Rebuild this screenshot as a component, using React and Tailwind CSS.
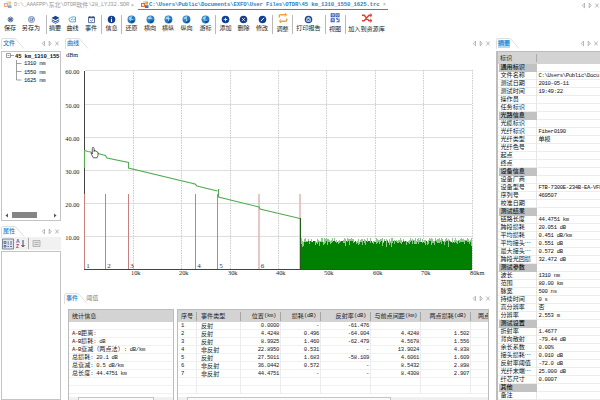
import React from "react";

const MONO = "font-['Liberation_Mono','Noto_Sans_CJK_SC',monospace]";

// Half-width characters use a 3px pitch, full-width ones a 6px pitch.
function T({ children, track = "tracking-[-0.33px]" }) {
  const runs = String(children).match(/[\x00-\x7f]+|[^\x00-\x7f]+/g) || [];
  return runs.map((r, i) =>
    r.charCodeAt(0) < 128 ? (
      <span key={i} className={`${MONO} whitespace-pre text-[5.6px] ${track}`}>{r}</span>
    ) : (
      <span key={i} className="whitespace-pre font-['Noto_Sans_CJK_SC',sans-serif] text-[6.1px]">{r}</span>
    )
  );
}

function Controls() {
  return (
    <svg className="h-[7px] w-[18px] shrink-0" viewBox="0 0 18 7" fill="none" stroke="#999" strokeWidth=".7">
      <path d="M3.5 1.2v4.6L1.2 3.5zM8.2 1.2v4.6l2-2.3zM14.3 1.5l3.4 4M17.7 1.5l-3.4 4" />
    </svg>
  );
}

function PanelTabs({ active, other, selected }) {
  return (
    <div className="flex h-[13px] items-center justify-between pr-[2px]">
      <div className="flex h-full items-center">
        <svg className="h-[13px] w-[24px]" viewBox="0 0 24 13">
          <path d="M.5 13V4Q.5 2.5 2 2.5H13Q15 2.500 16.500 5L23 12.500" fill="#fff" stroke="#d5d5d5" strokeWidth=".8" />
        </svg>
        <span className={`-ml-[22px] mt-[2px] flex h-[8px] items-center leading-none font-medium text-[#1581d0] ${selected ? "bg-[#b4dbf5]" : ""}`}>
          <T>{active}</T>
        </span>
        {other && <span className="mt-[2px] ml-[8px] flex leading-none text-[#888]"><T>{other}</T></span>}
      </div>
      <div className="flex pt-px"><Controls /></div>
    </div>
  );
}

function Logo() {
  return (
    <svg className="h-[8px] w-[8px] shrink-0" viewBox="0 0 8 8">
      <path d="M2 0h5v5H2z" fill="#d8dde6" />
      <path d="M0 2h4v4H0z" fill="#ef6a2e" />
      <path d="M4.5.8h2.6v2.5H4.5z" fill="#f0a52d" />
      <path d="M4 4.3h3.5V7H4z" fill="#3c78c4" />
      <path d="M1.2 3h1.6v2H1.2z" fill="#fff" />
    </svg>
  );
}

const disc = (fill, mark) => (
  <>
    <circle cx="5" cy="5" r="4.2" fill={fill} />
    {mark}
  </>
);
const globe = (mark) => (
  <>
    <circle cx="5" cy="5" r="4.4" fill="#2a7cc0" />
    <path d="M1.5 3.5Q3 .8 6 1.4L5 4 2.2 5z" fill="#8fd0f0" />
    <path d="M4 7l4.800-1.500Q8 8.800 5 9.200z" fill="#0f4a8e" />
    <path d={mark} fill="none" stroke="#d5edff" strokeWidth=".7" />
  </>
);
const ICONS = {
  save: (
    <g fill="none" stroke="#3e5b94" strokeWidth=".9">
      <circle cx="5" cy="5" r="2.7" />
      <path d="M3.7 4h2.6v2H3.7z" fill="#3e5b94" />
    </g>
  ),
  saveAs: (
    <g fill="none" stroke="#4767a3" strokeWidth=".8">
      <circle cx="5" cy="5" r="3.4" />
      <path d="M3.4 3.5h3v3h-3zM4.2 5l1.2 1 2-2.5" />
    </g>
  ),
  layers: (
    <g fill="#17458c">
      <path d="M5 .8L9.5 3.2 5 5.6.5 3.2z" />
      <path d="M.8 4.8L5 7l4.2-2.2v1L5 8 .8 5.8zM.8 6.7L5 8.8l4.2-2.1v.9L5 9.8.8 7.6z" />
    </g>
  ),
  curve: (
    <g fill="none" stroke="#309bca" strokeWidth=".9">
      <path d="M1.5 3.5h1.2L4 2.2h4.3v5.5H2.5L1.2 5z" />
      <path d="M3.2 6l1.5-1.8 1.5 1.3 1.5-1" />
    </g>
  ),
  event: (
    <g fill="none" stroke="#33528d" strokeWidth=".9">
      <path d="M1.7 2.2h6.6v6.3H1.7z" />
      <path d="M1.7 3h6.6M3.2 1v1M6.8 1v1" strokeWidth="1.3" />
      <path d="M3.5 6l1.2 1L6.8 5" />
    </g>
  ),
  info: disc("#123d91", <path d="M5 2.4v1M5 4.3v3.4" stroke="#fff" strokeWidth="1.2" />),
  restore: globe("M3 5h4M3 5l1.5-1.5M3 5l1.5 1.5"),
  horiz: globe("M2.8 4h4M5.8 3l1.2 1"),
  both: globe("M3 4h4M5 3v4"),
  vert: globe("M5 2.8v4M4 5.8l1 1 1-1"),
  cursor: globe("M3 5.8h4M4 3.2v2"),
  add: disc("#143f8e", <path d="M3 5h4M5 3v4" stroke="#fff" strokeWidth=".9" />),
  del: disc("#143f8e", <path d="M3.5 3.5l3 3M6.5 3.5l-3 3" stroke="#fff" strokeWidth=".9" />),
  edit: disc("#143f8e", <path d="M3.2 6.8l3.5-3.6" stroke="#fff" strokeWidth="1.1" />),
  adjust: (
    <g fill="none" stroke="#f2a43c" strokeWidth="1.4">
      <path d="M1.3 4.5V2.8q0-1 1-1H8M8.7 5.5v1.7q0 1-1 1H2" />
      <path d="M7 0l1.8 1.8L7 3.6M3 6.4L1.2 8.2 3 10" strokeWidth="1" />
    </g>
  ),
  print: disc("#1c4a93", <path d="M3 4h4v3H3zM3.8 2.8h2.4M4 5.5l1 .8 1.5-1.5" fill="none" stroke="#fff" strokeWidth=".8" />),
  view: (
    <g fill="none" stroke="#3459b5" strokeWidth="1.1">
      <path d="M1.2 .8h3v3h-3zM6 .8h3v3H6zM1.2 5.8h3v3h-3zM6 5.8h1.3v1.3M9 5.5v3.3H6.5" />
      <path d="M2.2 2.3h1M7 2.3h1M2.2 7.3h1" />
    </g>
  ),
  join: (
    <g fill="none" stroke="#e63b31" strokeWidth="1.4">
      <path d="M0 2.3h2.2L7 7.7h2.3M0 7.7h2.2L7 2.3h2.3" />
      <path d="M8.2.7L10 2.3 8.2 3.9M8.2 6.1L10 7.7 8.2 9.3" strokeWidth="1" />
    </g>
  ),
};

const SEP = "sep";
const TOOLS = [
  ["save", "保存", "w-[20px]"], ["saveAs", "另存为", "w-[22px]"], [SEP, "ml-[4px]"],
  ["layers", "摘要", "w-[16px]"], ["curve", "曲线", "w-[19px]"], ["event", "事件", "w-[18px]"], [SEP, "ml-px"],
  ["info", "信息", "w-[19px]"], [SEP, ""],
  ["restore", "还原", "w-[19px]"], ["horiz", "横向", "w-[18px]"], ["both", "横纵", "w-[18px]"],
  ["vert", "纵向", "w-[19px]"], ["cursor", "游标", "w-[19px]"], [SEP, ""],
  ["add", "添加", "w-[19px]"], ["del", "删除", "w-[17px]"], ["edit", "修改", "w-[20px]"], [SEP, ""],
  ["adjust", "调整", "w-[19px]", true], [SEP, ""],
  ["print", "打印报告", "w-[31px]"], [SEP, "ml-px"],
  ["view", "视图", "w-[18px]", true], [SEP, "ml-px"],
  ["join", "加入到资源库", "w-[41px]", true],
];

function Toolbar() {
  return (
    <div className="flex h-[26px] shrink-0 pt-[3px]">
      {TOOLS.map(([icon, label, w, low], i) =>
        icon === SEP ? (
          <div key={i} className={`mt-[2px] h-[19px] w-px shrink-0 bg-[#b9b9b9] ${label}`} />
        ) : (
          <div key={i} className={`flex shrink-0 flex-col items-center leading-none whitespace-nowrap text-[#1a1a1a] ${w} ${low ? "gap-[3px]" : "gap-px pt-[2px]"}`}>
            <svg className={`shrink-0 ${low ? "h-[10px] w-[10px]" : "h-[9px] w-[9px]"}`} viewBox="0 0 10 10">{ICONS[icon]}</svg>
            <span className="flex h-[7px] items-center"><T>{label}</T></span>
          </div>
        )
      )}
    </div>
  );
}

const SUMMARY = [
  ["通用标识"], ["文件名称", "C:\\Users\\Public\\Docu"], ["测试日期", "2010-05-11"], ["测试时间", "19:49:22"], ["操作员", ""], ["任务标识", ""],
  ["光路信息"], ["光缆标识", ""], ["光纤标识", "Fiber0190"], ["光纤类型", "单模"], ["光纤色号", ""], ["起点", ""], ["终点", ""],
  ["设备信息"], ["设备厂商", ""], ["设备型号", "FTB-7300E-234B-EA-VFL"], ["序列号", "469507"], ["校准日期", ""],
  ["测试结果"], ["链路长度", "44.4751 km"], ["跨段损耗", "20.051 dB"], ["平均损耗", "0.451 dB/km"], ["平均接头…", "0.551 dB"], ["最大接头…", "0.572 dB"], ["跨段光回损", "32.472 dB"],
  ["测试参数"], ["波长", "1310 nm"], ["范围", "80.00 km"], ["脉宽", "500 ns"], ["持续时间", "0 s"], ["高分辨率", "否"], ["分辨率", "2.553 m"],
  ["测试设置"], ["折射率", "1.4677"], ["背向散射", "-79.44 dB"], ["余长系数", "0.00%"], ["接头损耗…", "0.010 dB"], ["反射率阈值", "-72.0 dB"], ["光纤末端…", "25.000 dB"], ["纤芯尺寸", "0.0007"],
  ["其他"], ["备注", ""],
];

function Summary() {
  return (
    <div className="flex w-[104px] shrink-0 flex-col overflow-hidden">
      <PanelTabs active="摘要" selected />
      <div className="mt-[2px] flex-1 overflow-hidden border-t border-l-2 border-[#bcbcbc]">
        <div className="flex h-[12px] items-center bg-[#d3d3d3] leading-none text-[#222]">
          <span className="flex w-[38px] pl-[2px]"><T>标识</T></span>
          <div className="h-[8px] w-px bg-[#aaa]" />
        </div>
        {SUMMARY.map(([name, value], i) => (
          <div key={i} className="flex h-[8px] items-center whitespace-nowrap border-b border-[#ededed] leading-none text-[#111]">
            <div className={`ml-px flex h-[8px] w-[38px] shrink-0 items-center border-r pl-[1.5px] ${value === undefined ? "border-[#c2c2c2] bg-[#c2c2c2] font-medium" : "border-[#e6e6e6]"}`}><T>{name}</T></div>
            {value && <div className="flex pl-[1.5px]"><T>{value}</T></div>}
          </div>
        ))}
      </div>
    </div>
  );
}

const COLS = [
  ["序号", "w-[19px] pl-[3px]", ""],
  ["事件类型", "w-[44px] pl-[4px]", ""],
  ["位置(km)", "w-[40px] justify-end", "pr-[4px]"],
  ["损耗(dB)", "w-[40px] justify-end", "pr-[4px]"],
  ["反射率(dB)", "w-[50px] justify-end", "pr-[4px]"],
  ["与前点间距(km)", "w-[50px] justify-end", "pr-[3px]"],
  ["两点损耗(dB)", "w-[50px] justify-end", "pr-[4px]"],
  ["两点", "w-[18px] pl-[7px]", ""],
];
const EVENTS = [
  ["1", "反射", "0.0000", "-", "-61.476", "", ""],
  ["2", "反射", "4.4248", "0.496", "-64.004", "4.4248", "1.502"],
  ["3", "反射", "8.9925", "1.460", "-62.479", "4.5678", "1.556"],
  ["4", "非反射", "22.8950", "0.531", "-", "13.9024", "4.838"],
  ["5", "反射", "27.5011", "1.683", "-58.109", "4.6061", "1.609"],
  ["6", "非反射", "36.0442", "0.572", "-", "8.5432", "2.898"],
  ["7", "非反射", "44.4751", "-", "-", "8.4308", "2.907"],
  [], [],
];
const STATS = ["", "A-B距离:", "A-B损耗: dB", "A-B衰减（两点法）: dB/km", "总损耗: 20.1 dB", "总衰减: 0.5 dB/km", "总长度: 44.4751 km", "", ""];

function Scroll({ thumb }) {
  return (
    <div className="mt-[3px] flex h-[3px] bg-[#f0f0f0]">
      <div className="w-[9px] shrink-0" />
      <div className={`shrink-0 border border-b-0 border-[#c4c4c4] bg-[#fafafa] ${thumb}`} />
    </div>
  );
}

function EventPanel() {
  return (
    <div className="flex h-[109px] shrink-0 flex-col">
      <PanelTabs active="事件" other="阈值" />
      <div className="mt-[5px] flex flex-1 gap-[3px] overflow-hidden pl-[4px]">
        <div className="w-[106px] shrink-0 border-x border-t border-[#bcbcbc]">
          <div className="flex h-[12px] items-center bg-[#d3d3d3] pl-[3px] leading-none text-[#222]"><T>统计信息</T></div>
          {STATS.map((s, i) => (
            <div key={i} className="flex h-[8px] items-center whitespace-nowrap border-b border-[#f1f1f1] pl-[3px] leading-none text-[#222]"><T>{s}</T></div>
          ))}
          <Scroll thumb="w-[76px]" />
        </div>
        <div className="w-[312px] shrink-0 overflow-hidden border-x border-t border-[#bcbcbc]">
          <div className="flex h-[12px] items-center bg-[#d3d3d3] leading-none text-[#222]">
            {COLS.map(([name, w, pr]) => (
              <div key={name} className={`flex h-[9px] shrink-0 items-center whitespace-nowrap border-r border-[#a5a5a5] ${w} ${pr}`}><T>{name}</T></div>
            ))}
          </div>
          {EVENTS.map((row, r) => (
            <div key={r} className="flex h-[8px] items-center border-b border-[#f1f1f1] leading-none text-[#222]">
              {COLS.map(([name, w], c) => (
                <div key={name} className={`flex h-[8px] shrink-0 items-center whitespace-nowrap border-r border-[#ececec] pt-px ${w} ${c > 1 ? "pr-px" : ""}`}><T>{row[c] ?? ""}</T></div>
              ))}
            </div>
          ))}
          <Scroll thumb="w-[204px]" />
        </div>
      </div>
    </div>
  );
}

const NOISE = (() => {
  let seed = 41;
  const next = () => (seed = (seed * 16807) % 2147483647) / 2147483647;
  const bars = [];
  for (let x = 301; x < 472; x++) bars.push([x, 238 + Math.round(next() * 4), 241 + Math.round(next() * next() * 7)]);
  return bars;
})();
const MARKS = [[84.5, "1"], [105.5, "2"], [128.5, "3"], [195.5, "4"], [217.5, "5"], [259, "6"], [300, ""]];
const YS = [[70.5, "60.00"], [104.5, "50.00"], [137.5, "40.00"], [170.5, "30.00"], [203.5, "20.00"], [236.5, "10.00"]];
const XS = [[133.5, "10k"], [181.5, "20k"], [230.5, "30k"], [278.5, "40k"], [326.5, "50k"], [375.5, "60k"], [423.5, "70k"], [472.5, "80km"]];

function Chart() {
  const txt = "font-['Liberation_Serif',serif] text-[6.3px]";
  return (
    <svg className="h-[242px] w-[432px] shrink-0" viewBox="64 49 432 242">
      {YS.map(([y]) => <path key={y} d={`M85 ${y}H472`} stroke="#dedede" />)}
      {XS.map(([x]) => <path key={x} d={`M${x} 70V269`} stroke="#ccc" strokeDasharray="1.5 1" />)}
      {YS.map(([y, s]) => <text key={s} x="79.5" y={y + 3.2} textAnchor="end" className={txt} fill="#222">{s}</text>)}
      {XS.map(([x, s]) => <text key={s} x={x - 2.5} y="274.700" className={txt} fill="#222">{s}</text>)}
      <text x="66" y="57" className={txt} fill="#222">dBm</text>
      {NOISE.map(([x, a, b]) => (
        <g key={x}>
          <path d={`M${x + 0.5} ${a}V269`} stroke="#8fc88f" />
          <path d={`M${x + 0.5} ${b}V269`} stroke="#008000" />
        </g>
      ))}
      <path d="M84.5 71V269M84 269.5H472" stroke="#444" fill="none" />
      {MARKS.map(([x, s], i) => (
        <g key={x}>
          <path d={`M${x} 194V269`} stroke={i > 4 ? "#e3b9b5" : "#c97f7f"} strokeWidth={i > 4 ? 1.6 : 1} />
          <text x={x + 1.8} y="267.500" className="font-['Liberation_Serif',serif] text-[7px]" fill="#335">{s}</text>
        </g>
      ))}
      <path
        d="M84.5 168V150.5L88 151.5L99 153.8L105.5 155.5L107 158L128.5 162.5V168L195 184L197 186L217.5 191M218.5 189V197L259 207L260 209L300 218.5"
        fill="none" stroke="#4fac4f" strokeWidth="1.1"
      />
      <path d="M300.5 218V269" stroke="#225c18" />
      <path
        d="M92.3 154V148.3q.1-1.1 1-.9.8.1.8 1v3.2l.3-1.2q1.1-.3 1.2.8 1.1-.3 1.2.7 1.2-.2 1.2.9v2.6l-1 2.4h-3.7L91 153.2q.5-1 1.3.8"
        fill="#fff" stroke="#222" strokeWidth=".7"
      />
    </svg>
  );
}

function FilePanel() {
  return (
    <div className="flex w-[61px] shrink-0 flex-col pl-px">
      <PanelTabs active="文件" />
      <div className="mt-[2px] flex h-[170px] shrink-0 flex-col border border-[#c4c4c4] leading-none text-[#111]">
        <div className="flex h-[154px] shrink-0">
          <svg className="h-[40px] w-[21px] shrink-0" viewBox="0 0 21 40" fill="none" stroke="#888" strokeWidth=".8">
            <path d="M4.500 1.500h4v4h-4zM5.500 3.500h2M8.500 3.500h3.500M14.500 8v20h5M14.500 11.500h5M14.500 19.500h5" />
          </svg>
          <div className="-ml-[8px] flex w-[45px] shrink-0 flex-col pt-px">
            <span className="flex h-[7px] w-[45px] shrink-0 items-center overflow-x-clip font-bold whitespace-nowrap"><T track="tracking-[-0.2px]">45 km_1310_155</T></span>
            <div className="flex flex-col pl-[9px]">
              {["1310 nm", "1550 nm", "1625 nm"].map((s) => <span key={s} className="flex h-[8.500px] shrink-0 items-center"><T>{s}</T></span>)}
            </div>
          </div>
        </div>
        <div className="mt-[5px] flex h-[8px] shrink-0 items-center">
          <svg className="ml-[3px] h-[5px] w-[4px] shrink-0" viewBox="0 0 4 5"><path d="M3 .5v4L.5 2.500z" fill="#555" /></svg>
          <div className="ml-[3px] h-[6px] w-[25px] shrink-0 bg-[#858585]" />
          <svg className="ml-[16px] h-[5px] w-[4px] shrink-0" viewBox="0 0 4 5"><path d="M1 .5v4l2.500-2z" fill="#555" /></svg>
        </div>
      </div>
      <div className="mt-[3px]"><PanelTabs active="属性" /></div>
      <div className="flex h-[13px] shrink-0 items-center gap-[2px] bg-[#f0f1f0] pl-px">
        <svg className="h-[12px] w-[12px]" viewBox="0 0 12 12" fill="none" stroke="#5f7190">
          <path d="M.5 1h11v10H.5z" fill="#dfe3ec" strokeWidth=".8" />
          <path d="M2 3.500h2v2H2zM2 7.500h2v1.500H2zM5.500 4h1.500M8 4h2M5.500 6h1.500M8 6h2M5.500 8.500h1.500M8 8.500h2" strokeWidth="1" />
        </svg>
        <span className="flex flex-col pr-px font-['Liberation_Sans',sans-serif] text-[5px] leading-[4.500px] font-bold">
          <span className="text-[#3b67b9]">A</span><span className="text-[#a33d49]">Z</span>
        </span>
        <svg className="-ml-[2px] h-[9px] w-[4px]" viewBox="0 0 4 9"><path d="M2 1v6.500M.5 6L2 7.800 3.500 6" stroke="#333" fill="none" strokeWidth=".9" /></svg>
        <div className="ml-px h-[11px] w-px bg-[#aaa]" />
        <svg className="ml-px h-[9px] w-[9px]" viewBox="0 0 9 9"><path d="M1 1.500h7v6H1zM2.500 3.500h4M2.500 5.500h4" fill="#e2e2e2" stroke="#aaa" strokeWidth=".8" /></svg>
      </div>
      <div className="mt-px flex-1 border border-[#c4c4c4]" />
    </div>
  );
}

export default function App() {
  return (
    <div className="flex h-[400px] w-[600px] flex-col overflow-hidden bg-white">
      <div className="flex h-[10px] shrink-0 items-center whitespace-nowrap leading-none">
        <div className="flex h-[10px] w-[138px] items-center pl-[4px] text-[#999]">
          <span className="opacity-60"><Logo /></span>
          <span className="ml-[2px] flex w-[117px] items-center"><T track="tracking-[-0.23px]">{"D:\\_AAAFPP\\东北\\OTDR软件\\28_LYJ32.SOR"}</T></span>
          <span className="font-['Liberation_Sans',sans-serif] text-[5px]">×</span>
        </div>
        <div className="flex h-[10px] w-[250px] items-center border-b border-[#2b8fd5] pl-[3px] font-bold text-[#2586c9]">
          <Logo />
          <span className="flex w-[231px] items-center"><T track="tracking-[-0.11px]">{"C:\\Users\\Public\\Documents\\EXFO\\User Files\\OTDR\\45 km_1310_1550_1625.trc"}</T></span>
          <span className="ml-[3px] font-['Liberation_Sans',sans-serif] text-[5px] font-normal text-[#999]">×</span>
        </div>
        <div className="flex-1" />
        <div className="pr-px"><Controls /></div>
      </div>
      <Toolbar />
      <div className="flex h-[364px]">
        <FilePanel />
        <div className="flex w-[435px] shrink-0 flex-col pl-[3px]">
          <div className="w-[428px] pl-px"><PanelTabs active="曲线" /></div>
          <Chart />
          <div className="w-[428px]"><EventPanel /></div>
        </div>
        <Summary />
      </div>
    </div>
  );
}
